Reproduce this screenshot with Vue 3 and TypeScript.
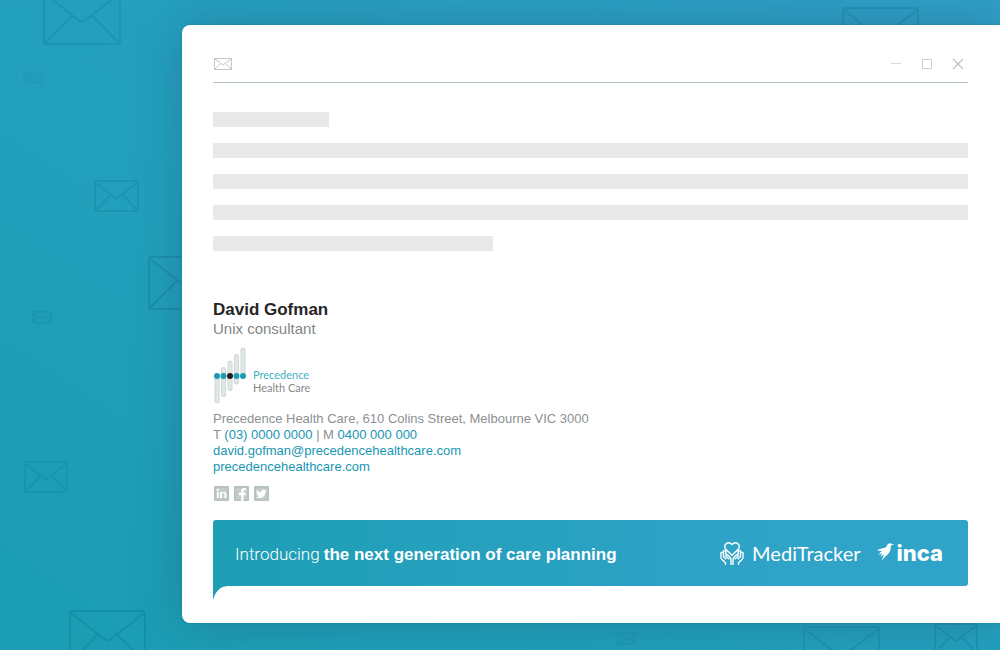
<script setup lang="ts">
interface Envelope {
  x: number
  y: number
  w: number
  h: number
  o: number
}

const envelopes: Envelope[] = [
  { x: 43, y: -9, w: 78, h: 54, o: 0.3 },
  { x: 23, y: 71, w: 20, h: 13, o: 0.1 },
  { x: 94, y: 180, w: 45, h: 32, o: 0.25 },
  { x: 148, y: 256, w: 78, h: 54, o: 0.4 },
  { x: 32, y: 311, w: 20, h: 13, o: 0.18 },
  { x: 24, y: 461, w: 44, h: 32, o: 0.24 },
  { x: 69, y: 610, w: 77, h: 54, o: 0.36 },
  { x: 842, y: 7, w: 77, h: 54, o: 0.32 },
  { x: 616, y: 632, w: 20, h: 13, o: 0.14 },
  { x: 803, y: 626, w: 77, h: 54, o: 0.3 },
  { x: 934, y: 623, w: 44, h: 31, o: 0.3 },
]

const lines: string[] = ['short', 'full', 'full', 'full', 'medium']

const pillars = [
  { x: 8, top: 58, bottom: 108, dot: '#1a9bb3' },
  { x: 21, top: 45, bottom: 95, dot: '#1a9bb3' },
  { x: 34, top: 32, bottom: 83, dot: '#231f20' },
  { x: 47, top: 19, bottom: 70, dot: '#1a9bb3' },
  { x: 60, top: 6, bottom: 58, dot: '#1a9bb3' },
]
</script>

<template>
  <div class="page">
    <svg
      v-for="(e, i) in envelopes"
      :key="i"
      class="envelope"
      :viewBox="`0 0 ${e.w} ${e.h}`"
      :style="{ left: e.x + 'px', top: e.y + 'px', width: e.w + 'px', height: e.h + 'px', opacity: e.o }"
      aria-hidden="true"
    >
      <rect x="1" y="1" :width="e.w - 2" :height="e.h - 2" rx="2" />
      <path
        :d="`M2 3 L${e.w * 0.46} ${e.h * 0.54} Q${e.w / 2} ${e.h * 0.59} ${e.w * 0.54} ${e.h * 0.54} L${e.w - 2} 3 M2 ${e.h - 2} L${e.w * 0.37} ${e.h * 0.46} M${e.w - 2} ${e.h - 2} L${e.w * 0.63} ${e.h * 0.46}`"
      />
    </svg>

    <main class="window">
      <header class="bar">
        <svg class="mail" viewBox="0 0 20 14" aria-hidden="true">
          <rect x="1.5" y="1.5" width="17" height="11" />
          <path d="M2 2l8 6 8-6M2 12l5.500-5.500M18 12l-5.500-5.500" />
        </svg>
        <div class="controls">
          <button type="button" aria-label="Minimise">
            <svg viewBox="0 0 12 12"><path d="M1 5.500h10" stroke="#d5dada" /></svg>
          </button>
          <button type="button" aria-label="Maximise">
            <svg viewBox="0 0 12 12"><rect x="1.500" y="1.500" width="9" height="9" stroke="#cbd2d2" /></svg>
          </button>
          <button type="button" aria-label="Close">
            <svg viewBox="0 0 12 12"><path d="M1 1l10 10M11 1L1 11" stroke="#b9c3c5" stroke-width="1.300" /></svg>
          </button>
        </div>
      </header>

      <div class="lines">
        <div v-for="(l, i) in lines" :key="i" class="line" :class="l"></div>
      </div>

      <section class="signature">
        <h1>David Gofman</h1>
        <p class="role">Unix consultant</p>

        <div class="company">
          <svg class="pillars" viewBox="0 0 68 114" aria-hidden="true">
            <template v-for="p in pillars" :key="p.x">
              <line :x1="p.x" :x2="p.x" :y1="p.top" :y2="p.bottom" class="outer" />
              <line :x1="p.x" :x2="p.x" :y1="p.top" :y2="p.bottom" class="inner" />
              <circle :cx="p.x" cy="58" r="6" :fill="p.dot" />
            </template>
          </svg>
          <div class="company-name">
            <div class="first">Precedence</div>
            <div>Health Care</div>
          </div>
        </div>

        <address>
          Precedence Health Care, 610 Colins Street, Melbourne VIC 3000<br />
          T <a href="tel:0300000000">(03) 0000 0000</a> | M <a href="tel:0400000000">0400 000 000</a><br />
          <a href="mailto:david.gofman@precedencehealthcare.com">david.gofman@precedencehealthcare.com</a><br />
          <a href="https://precedencehealthcare.com">precedencehealthcare.com</a>
        </address>

        <nav class="social">
          <a href="#linkedin" aria-label="LinkedIn">
            <svg viewBox="0 0 16 16">
              <rect class="frame" x="1" y="1" width="14" height="14" />
              <path d="M3 6.300h2.200v6.500H3zM3 3h2.200v2.200H3zM6.500 6.300h2v.9c.5-.7 1.200-1.100 2.100-1.100 1.800 0 2.600 1.100 2.600 3v3.700h-2.100V9.400c0-1-.3-1.600-1.200-1.600s-1.300.6-1.300 1.700v3.300H6.500z" class="cut" />
            </svg>
          </a>
          <a href="#facebook" aria-label="Facebook">
            <svg viewBox="0 0 16 16">
              <rect class="frame" x="1" y="1" width="14" height="14" />
              <path class="cut" d="M7.500 16V9.800H5.200V7.300h2.300V5.600c0-2.300 1.300-3.500 3.400-3.500.8 0 1.500.1 1.900.2v2.300h-1.300c-1 0-1.300.5-1.300 1.200v1.500h2.500l-.4 2.500h-2.100V16z" />
            </svg>
          </a>
          <a href="#twitter" aria-label="Twitter">
            <svg viewBox="0 0 16 16">
              <rect class="frame" x="1" y="1" width="14" height="14" />
              <path class="cut" d="M13.500 4.700c-.4.200-.9.300-1.300.4.500-.3.800-.7 1-1.200-.5.200-1 .4-1.500.5a2.350 2.350 0 0 0-4 2.100C5.700 6.400 4 5.500 2.900 4.100c-.6 1.100-.3 2.400.7 3.100-.4 0-.7-.1-1-.3 0 1.100.8 2.100 1.900 2.300-.4.100-.7.100-1.100 0 .3.900 1.200 1.600 2.200 1.600-1 .7-2.200 1.100-3.400 1 4.500 2.800 10.200-.2 10.200-5.900.4-.3.800-.7 1.100-1.200z" />
            </svg>
          </a>
        </nav>
      </section>

      <aside class="banner">
        <p>Introducing <strong>the next generation of care planning</strong></p>
        <div class="brand medi">
          <svg viewBox="0 0 24 25" aria-hidden="true">
            <path d="M12 14.300L5.900 8.300C2.800 4.500 7.500-1 12 3.500 16.500-1 21.200 4.500 18.100 8.300z" />
            <path d="M5.500 24v-2.200L1.800 18.200Q1 17.300 1 16v-4.200q1.300-1.300 2.500 0V10q1.400-1.200 2.400.2V15l3.300 3.200M3.500 12v3.500l2.800 2.800M5.900 14.500c1-1.200 2-.6 2.700.2l1.500 1.800q.9 1 .9 2.400V24" />
            <path d="M18.500 24v-2.200l3.700-3.600q.8-.9.800-2.200v-4.200q-1.300-1.300-2.500 0V10q-1.400-1.200-2.400.2V15l-3.300 3.200M20.500 12v3.500l-2.800 2.800M18.100 14.500c-1-1.200-2-.6-2.700.2l-1.500 1.800q-.9 1-.9 2.400V24" />
          </svg>
          <span>MediTracker</span>
        </div>
        <div class="brand inca">
          <svg viewBox="0 0 18 20" aria-hidden="true">
            <path d="M0 7.500C3 5.500 6.500 5.300 9 4.300 10 2.500 10.500.5 12.700.3c1.500-.1 2 .9 5 1.300-2.500.1-3.600.4-3.900 2.100-.1 3.800-1.300 6.800-4.300 8.800L4.500 17.500 7 11.500l-3.800 2.200 2-3.300-3.700 1L4.800 8z" />
          </svg>
          <span>inca</span>
        </div>
        <svg class="tail" viewBox="0 0 16 14" aria-hidden="true">
          <path d="M0 0h16C8 0 3 4 0 14z" />
        </svg>
      </aside>
    </main>
  </div>
</template>

<style>
body {
  margin: 0;
}
</style>

<style scoped>
.page {
  position: relative;
  box-sizing: border-box;
  min-height: 100vh;
  padding: 25px 0 27px 182px;
  overflow: hidden;
  background: linear-gradient(to top right, #1a9db2, #23a0be 50%, #309fc8);
  font-family: "Liberation Sans", Arial, sans-serif;
}

.envelope {
  position: absolute;
  fill: none;
  stroke: #127896;
  stroke-width: 2;
}

.window {
  position: relative;
  box-sizing: border-box;
  padding: 0 32px 37px 31px;
  border-radius: 8px 0 0 8px;
  background: #fff;
  box-shadow: 0 0 46px rgba(34, 88, 120, 0.42), 0 0 2px #1787a0;
}

.bar {
  display: flex;
  align-items: center;
  justify-content: space-between;
  box-sizing: border-box;
  height: 58px;
  padding-top: 20px;
  border-bottom: 1px solid #b3c2c4;
}

.mail {
  width: 20px;
  height: 14px;
  fill: none;
  stroke: #c0c9ca;
}

.controls {
  display: flex;
  gap: 19px;
  padding-right: 4px;
}

.controls button {
  display: block;
  width: 12px;
  height: 12px;
  padding: 0;
  border: 0;
  background: none;
}

.controls svg {
  display: block;
  fill: none;
}

.lines {
  display: grid;
  gap: 16px;
  margin-top: 29px;
}

.line {
  height: 15px;
  background: #e9e9e9;
}

.short {
  width: 116px;
}

.medium {
  width: 280px;
}

.signature {
  margin-top: 49px;
}

h1 {
  margin: 0;
  color: #262526;
  font-size: 17px;
  line-height: 20px;
}

.role {
  margin: 0;
  color: #828687;
  font-size: 15px;
  line-height: 17px;
}

.company {
  display: flex;
  align-items: center;
  gap: 6px;
  margin-top: 10px;
}

.pillars {
  width: 34px;
  height: 57px;
}

.outer {
  stroke: #cfd7d7;
  stroke-width: 10;
  stroke-linecap: round;
}

.inner {
  stroke: #e1e7e7;
  stroke-width: 6;
  stroke-linecap: round;
}

.company-name {
  padding-top: 10px;
  color: #85898a;
  font-family: Lato, sans-serif;
  font-size: 11px;
  line-height: 13px;
}

.first {
  color: #45b0c4;
}

address {
  margin-top: 7px;
  color: #8d9091;
  font-size: 13px;
  font-style: normal;
  line-height: 16px;
}

address a {
  color: #1796b2;
  text-decoration: none;
}

.social {
  display: flex;
  gap: 5px;
  margin-top: 11px;
  padding-left: 1px;
}

.social svg {
  display: block;
  width: 15px;
  height: 15px;
}

.frame {
  fill: #c3cbcb;
  stroke: #b9c2c3;
  stroke-width: 2;
  stroke-linejoin: round;
}

.social .cut {
  fill: #fff;
}

.banner {
  position: relative;
  display: flex;
  align-items: center;
  height: 66px;
  margin-top: 19px;
  padding: 0 25px 0 22px;
  border-radius: 3px 3px 3px 0;
  background: linear-gradient(to right, #1d9eb5, #30a3c8 75%);
  color: #fff;
}

.banner p {
  flex: 1;
  margin: 0;
  padding-top: 2px;
  font-family: Roboto, sans-serif;
  font-size: 17px;
  font-weight: 300;
}

.banner strong {
  font-family: "Liberation Sans", Arial, sans-serif;
  font-weight: 700;
}

.brand {
  display: flex;
  align-items: center;
}

.medi {
  gap: 8px;
  margin-right: 16px;
  font-family: Lato, sans-serif;
  font-size: 20px;
}

.medi svg {
  width: 24px;
  height: 25px;
  fill: none;
  stroke: #fff;
  stroke-width: 1.4;
}

.inca {
  gap: 2px;
  font-family: Inter, sans-serif;
  font-size: 22px;
  font-weight: 800;
  line-height: 22px;
}

.inca svg {
  width: 18px;
  height: 20px;
  fill: #fff;
}

.tail {
  position: absolute;
  top: 100%;
  left: 0;
  width: 16px;
  height: 14px;
  fill: #1d9eb5;
}
</style>
